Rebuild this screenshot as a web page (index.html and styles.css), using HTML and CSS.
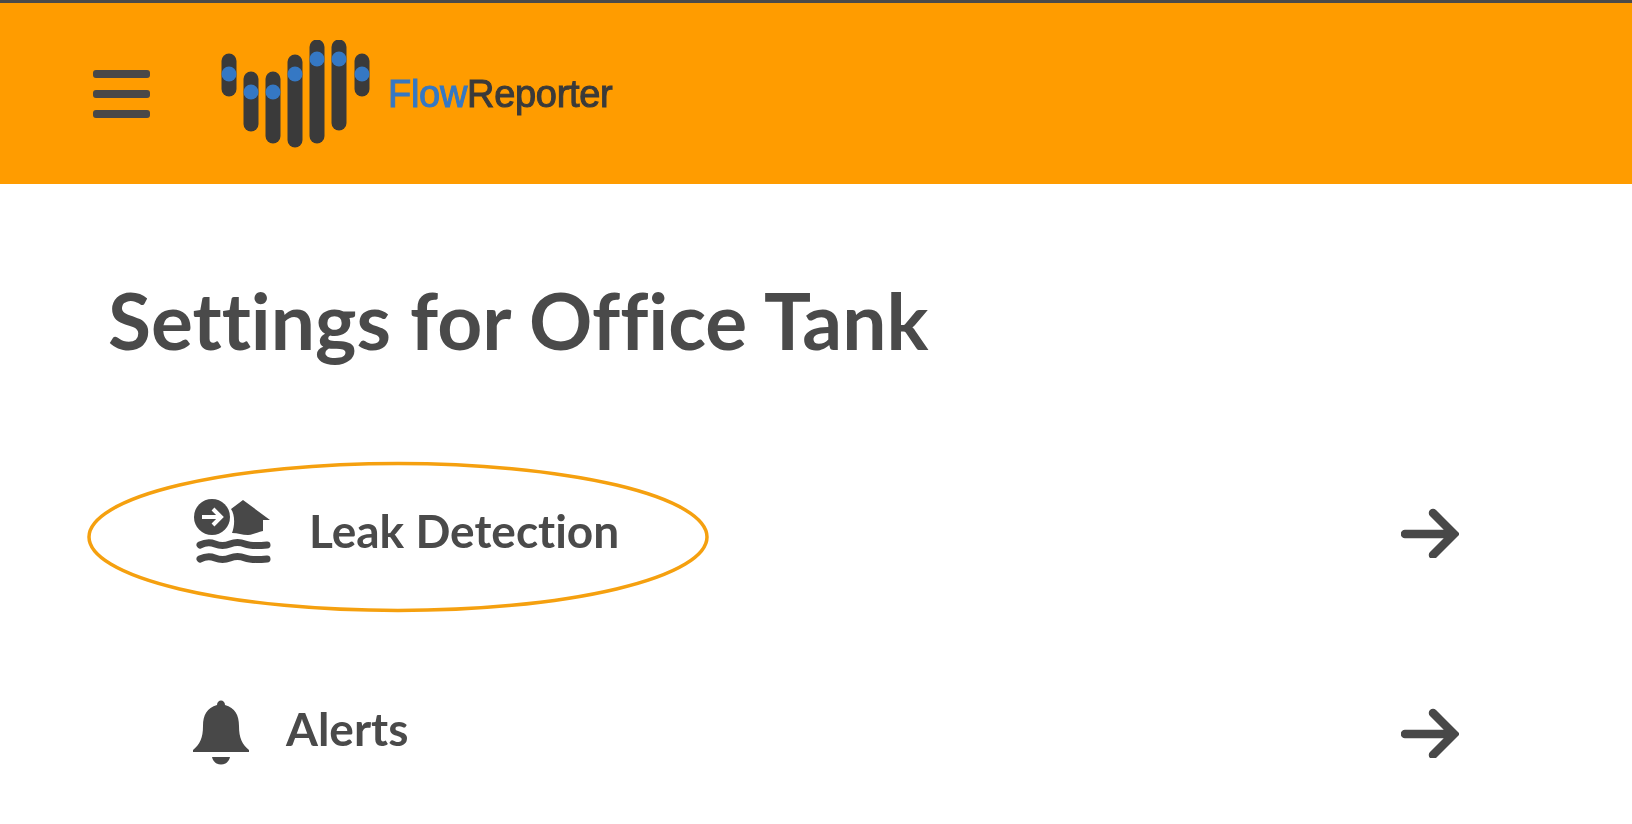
FILE: index.html
```html
<!DOCTYPE html>
<html lang="en">
  <head>
    <meta charset="utf-8">
    <title>FlowReporter</title>
    <link rel="stylesheet" href="styles.css">
  </head>
  <body>
    <header class="topbar">
      <button class="menu-button" type="button" aria-label="Menu">
        <span></span><span></span><span></span>
      </button>
      <div class="logo">
        <svg class="logo-mark" width="156" height="110" viewBox="0 0 156 110">
          <g stroke="#3a3a3a" stroke-width="15" stroke-linecap="round">
            <path d="M8 21V49"/>
            <path d="M30 39V84"/>
            <path d="M52 39V96"/>
            <path d="M74 22V100"/>
            <path d="M96 7V96"/>
            <path d="M118 7V83"/>
            <path d="M141 21V49"/>
          </g>
          <g fill="#3578c4">
            <circle cx="8" cy="34" r="7.5"/>
            <circle cx="30" cy="52" r="7.5"/>
            <circle cx="52" cy="52" r="7.5"/>
            <circle cx="74" cy="34" r="7.5"/>
            <circle cx="96" cy="19" r="7.5"/>
            <circle cx="118" cy="19" r="7.5"/>
            <circle cx="141" cy="34" r="7.5"/>
          </g>
        </svg>
        <span class="logo-text"><span class="logo-flow">Flow</span>Reporter</span>
      </div>
    </header>

    <main class="content">
      <h1 class="title">Settings for Office Tank</h1>

      <div class="setting-row setting-row-leak">
        <!-- hand drawn highlight round the first entry -->
        <svg class="highlight" width="624" height="152" viewBox="0 0 624 152">
          <ellipse cx="312" cy="76" rx="309" ry="73.5" fill="none" stroke="#f5a00f" stroke-width="3.5"/>
        </svg>
        <svg class="icon-leak" width="80" height="70" viewBox="0 0 80 70">
          <circle cx="20" cy="19" r="18" fill="#484848"/>
          <path d="M10 19H29M21 11L29 19L21 27" fill="none" stroke="#fff" stroke-width="4"/>
          <path d="M51 2L78 22H71V33C65 34 61 37 56 37C50 37 46 35 40 35C43 27 43 17 39 11Z" fill="#484848"/>
          <g fill="none" stroke="#484848" stroke-width="7" stroke-linecap="round">
            <path d="M8 47C14 44 18 44 23 46C28 48 33 48 38 46C43 44 48 44 53 46C58 48 64 48 75 47"/>
            <path d="M8 61C14 58 18 58 23 60C28 62 33 62 38 60C43 58 48 58 53 60C58 62 64 62 75 61"/>
          </g>
        </svg>
        <span class="setting-label">Leak Detection</span>
        <svg class="icon-arrow" width="58" height="50" viewBox="0 0 58 50">
          <path d="M4 26H52M32 5L53 26L32 47" fill="none" stroke="#484848" stroke-width="8.5" stroke-linecap="round"/>
        </svg>
      </div>

      <div class="setting-row setting-row-alerts">
        <svg class="icon-bell" width="58" height="66" viewBox="0 0 58 66">
          <path d="M25 5C25 -1 33 -1 33 5C43 8 47 15 47 26C47 38 50 44 57 50V52H1V50C8 44 11 38 11 26C11 15 15 8 25 5Z" fill="#484848"/>
          <path d="M20 57H38C36 67 22 67 20 57Z" fill="#484848"/>
        </svg>
        <span class="setting-label">Alerts</span>
        <svg class="icon-arrow" width="58" height="50" viewBox="0 0 58 50">
          <path d="M4 26H52M32 5L53 26L32 47" fill="none" stroke="#484848" stroke-width="8.5" stroke-linecap="round"/>
        </svg>
      </div>
    </main>
  </body>
</html>
```

FILE: styles.css
```css
/* page */
body {
    margin: 0;
    background-color: #ffffff;
    color: #4a4a4a;
    font-family: 'Lato', sans-serif;
    font-variant-ligatures: none;
}

/* orange bar */
.topbar {
    display: flex;
    align-items: center;
    height: 181px;
    padding-left: 93px;
    background-color: #ff9c00;
    border-top: 3px solid #4a4a4a;
}

.menu-button {
    display: flex;
    flex-direction: column;
    gap: 12px;
    width: 57px;
    padding: 0;
    margin-top: 1px;
    background: none;
    border: none;
    filter: blur(0.6px);
}

.menu-button span {
    height: 8px;
    background-color: #484848;
    border-radius: 3px;
}

.logo {
    display: flex;
    align-items: center;
    margin-left: 71px;
    margin-top: 3px;
    filter: blur(0.7px);
}

.logo-mark {
    display: block;
}

.logo-text {
    margin-left: 11px;
    margin-top: -2px;
    font-family: 'Liberation Sans', sans-serif;
    font-size: 38px;
    letter-spacing: -0.3px;
    color: #3a3a3a;
    -webkit-text-stroke: 1px #3a3a3a;
}

.logo-flow {
    color: #3578c4;
    -webkit-text-stroke: 1px #3578c4;
}

/* settings list */
.content {
    padding: 92px 173px 0 108px;
}

.title {
    margin: 0;
    font-size: 78.5px;
    line-height: 88px;
    font-weight: 700;
    filter: blur(0.5px);
}

.setting-row {
    position: relative;
    display: flex;
    align-items: center;
    padding-left: 84px;
    font-size: 46px;
    font-weight: 700;
}

.setting-row-leak {
    margin-top: 134px;
    height: 70px;
}

.setting-row-alerts {
    margin-top: 132px;
    height: 66px;
}

.setting-row svg,
.setting-label {
    filter: blur(0.6px);
}

.setting-row-leak .setting-label {
    margin-top: -6px;
}

.setting-row-alerts .setting-label {
    margin-top: -10px;
}

.highlight {
    position: absolute;
    left: -22px;
    top: -37px;
}

.icon-leak {
    margin-right: 37px;
}

.icon-bell {
    margin-right: 36px;
}

.icon-arrow {
    margin-left: auto;
}
```
